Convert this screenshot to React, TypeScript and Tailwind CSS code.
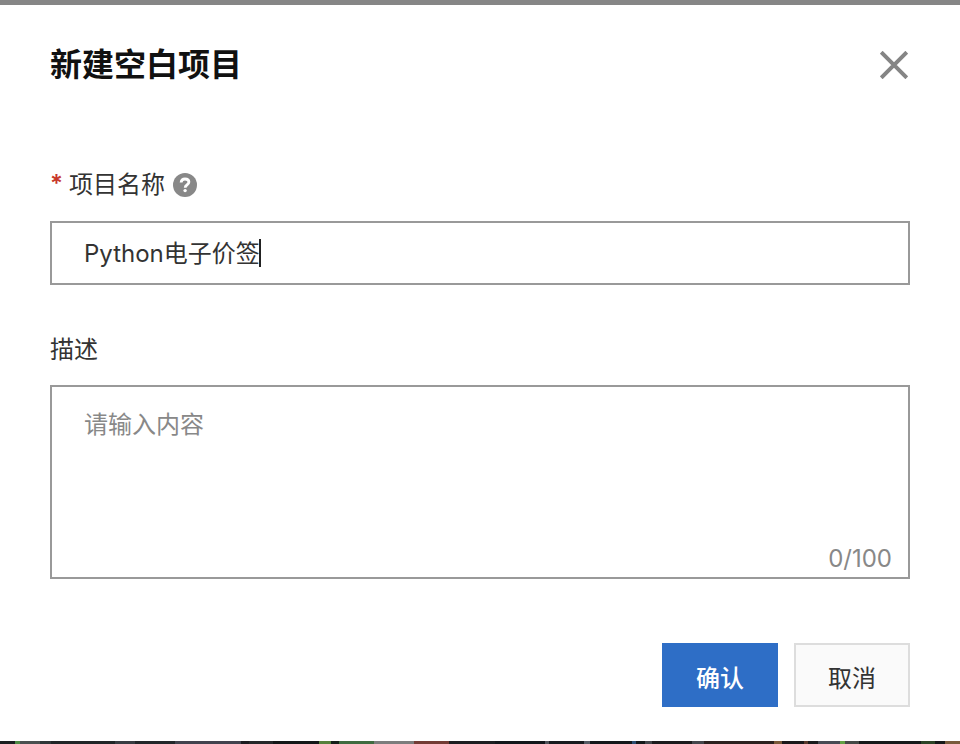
// Colour runs of the page that shows beneath the dialog: [width, colour]
const backdrop: [number, string][] = [
  [15, '#1a1f20'], [5, '#4d8a45'], [20, '#4a5050'], [11, '#2f3638'], [64, '#202527'],
  [20, '#383c42'], [40, '#22272a'], [66, '#41434e'], [8, '#1b1c20'], [24, '#25282a'],
  [46, '#131718'], [12, '#56803c'], [8, '#14201a'], [35, '#3f6b40'], [40, '#7c7d7d'],
  [35, '#733c35'], [46, '#1c1e21'], [50, '#12171b'], [4, '#4f545b'], [35, '#171b1f'],
  [6, '#555c65'], [42, '#13181b'], [4, '#2c4d72'], [9, '#141819'], [7, '#43464b'],
  [40, '#1b1b1d'], [12, '#44464c'], [70, '#2b211f'], [8, '#7a5939'], [22, '#1a191b'],
  [4, '#5a3a2c'], [10, '#191a1c'], [22, '#474b54'], [5, '#61a044'], [14, '#444947'],
  [62, '#15191a'], [14, '#2c4427'], [10, '#151819'], [19, '#795b3c'],
];

export default function App() {
  return (
    <div className="flex h-[744px] w-[960px] flex-col overflow-hidden bg-white font-[Inter,'Noto_Sans_CJK_SC',sans-serif] text-2xl text-[#333333]">
      <div className="h-[5px] shrink-0 bg-[#868686]" />
      <main className="flex h-[736px] shrink-0 flex-col px-[50px]">
        <header className="mt-[33px] flex h-12 items-center justify-between">
          <h1 className="font-['Noto_Sans_CJK_SC',sans-serif] text-[32px] leading-[48px] font-bold text-[#111111]">新建空白项目</h1>
          <button aria-label="关闭" className="mt-1.5 mr-0.5">
            <svg width="28" height="28" viewBox="0 0 28 28" fill="none" stroke="#858585" strokeWidth="4">
              <path d="M1.2 1.2 26.8 26.8M26.8 1.2 1.2 26.8" />
            </svg>
          </button>
        </header>
        <label className="mt-[81px] flex h-9 items-center">
          <span className="w-[19px] pb-0.5 font-semibold text-[#c8372c]">*</span>
          <span>项目名称</span>
          <svg className="ml-2" width="24" height="24" viewBox="0 0 24 24">
            <circle cx="12" cy="12" r="12" fill="#888888" />
            <path d="M8.1 9.5c.2-2.3 1.7-3.5 3.9-3.5 2.4 0 3.9 1.2 3.9 3.1 0 1.3-.7 2.1-2 2.9-1.3.8-1.7 1.3-1.7 2.7" fill="none" stroke="white" strokeWidth="2.8" />
            <circle cx="12.1" cy="17.6" r="1.7" fill="white" />
          </svg>
        </label>
        <div className="mt-[18px] flex h-16 items-center border-2 border-[#999999] pt-0.5 pl-8">
          <span>Python电子价签</span>
          <span className="mb-0.5 -ml-px h-7 w-0.5 bg-[#222222]" />
        </div>
        <label className="mt-[47px] flex h-9 items-center">描述</label>
        <div className="mt-[17px] flex h-[194px] flex-col justify-between border-2 border-[#999999] pt-5 pr-4 pl-8 text-[#888888]">
          <span className="leading-9">请输入内容</span>
          <span className="self-end leading-9">0/100</span>
        </div>
        <footer className="mt-16 flex justify-end gap-4">
          <button className="h-16 w-[116px] bg-[#2e6ec6] pt-2 font-medium text-white">确认</button>
          <button className="h-16 w-[116px] border-2 border-[#dddddd] bg-[#fafafa] pt-2">取消</button>
        </footer>
      </main>
      <div className="flex h-[3px] shrink-0 bg-[#171b1d]">
        {backdrop.map(([width, color], i) => (
          <span key={i} className="shrink-0" style={{ width, backgroundColor: color }} />
        ))}
      </div>
    </div>
  );
}
